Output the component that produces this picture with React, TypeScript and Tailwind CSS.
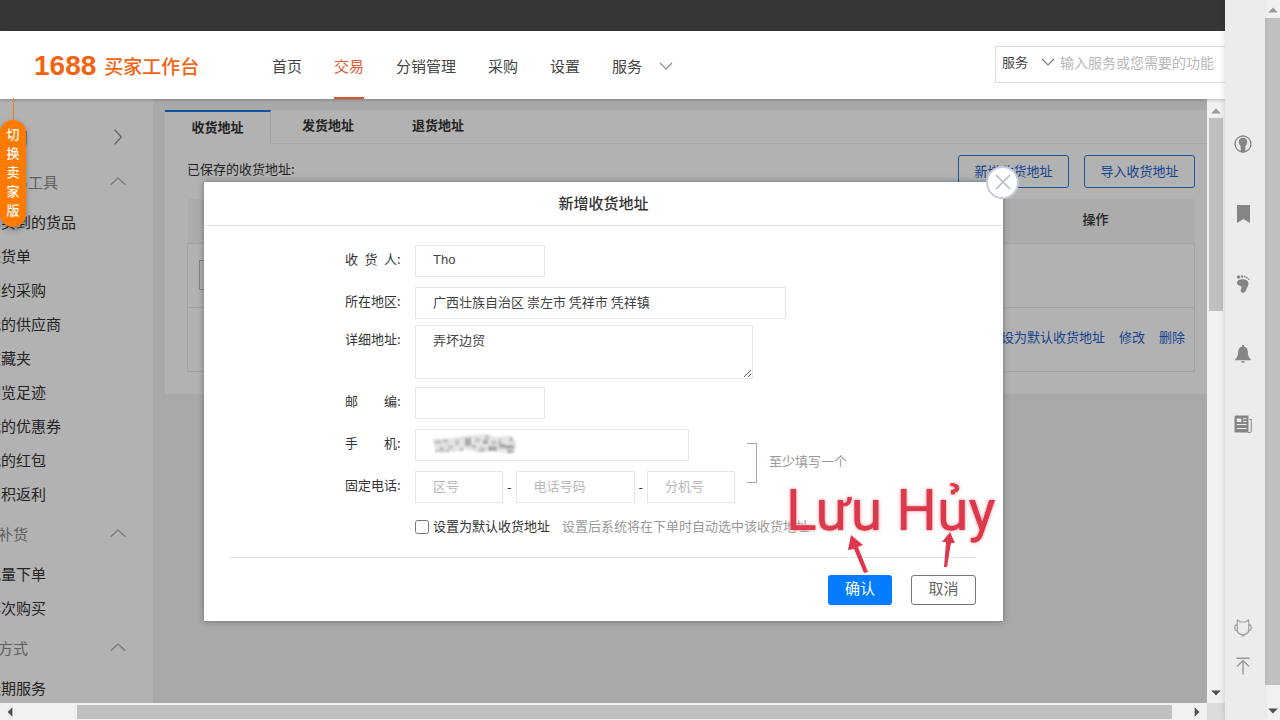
import { useState } from "react";

type MenuEntry = { label: string; heading?: boolean };

const NAV = ["首页", "交易", "分销管理", "采购", "设置"];
const TABS = ["收货地址", "发货地址", "退货地址"];

const MENU: MenuEntry[] = [
  { label: "交易工具", heading: true },
  { label: "已买到的货品" },
  { label: "进货单" },
  { label: "签约采购" },
  { label: "我的供应商" },
  { label: "收藏夹" },
  { label: "浏览足迹" },
  { label: "我的优惠券" },
  { label: "我的红包" },
  { label: "累积返利" },
  { label: "补货", heading: true },
  { label: "批量下单" },
  { label: "再次购买" },
  { label: "方式", heading: true },
  { label: "账期服务" },
];

const field = "h-8 border border-[#e6e6e6] bg-white px-[17px] pb-0.5 text-[13px] text-[#444] outline-none placeholder:text-[#b8b8b8]";

function Chevron({ className, d }: { className: string; d: string }) {
  return (
    <svg className={className} viewBox="0 0 16 16" fill="none" stroke="currentColor" strokeWidth={1.1}>
      <path d={d} />
    </svg>
  );
}

function Arrow({ className, points }: { className: string; points: string }) {
  return (
    <svg className={`shrink-0 ${className}`} viewBox="0 0 10 10" fill="currentColor">
      <polygon points={points} />
    </svg>
  );
}

function FieldLabel({ id, text }: { id: string; text: string }) {
  return (
    <label htmlFor={id} className="mr-3 flex h-8 w-[58px] shrink-0 items-center pb-[3px]">
      <span className="w-[52px] whitespace-nowrap [text-align-last:justify]">{text}</span>:
    </label>
  );
}

function Header() {
  return (
    <header className="relative z-10 flex h-[68px] shrink-0 items-center bg-white pl-[34px] shadow-[0_1px_3px_rgba(0,0,0,0.25)]">
      <a href="#" className="flex w-[238px] shrink-0 items-center gap-2 pt-0.5 text-[#f26413]">
        <span className="text-[28px] leading-8 font-bold font-['Liberation_Sans',sans-serif]">1688</span>
        <span className="text-[19px] font-medium">买家工作台</span>
      </a>
      <nav className="flex h-full items-center gap-8 text-[15px] text-[#444]">
        {NAV.map((n) => (
          <a
            key={n}
            href="#"
            className={`flex h-full items-center border-b-2 pt-1 whitespace-nowrap ${n === "交易" ? "border-[#d9532c] text-[#e0592f]" : "border-transparent"}`}
          >
            {n}
          </a>
        ))}
        <a href="#" className="flex h-full items-center gap-4 border-b-2 border-transparent pt-1 whitespace-nowrap">
          服务
          <Chevron className="size-4 text-[#888]" d="M2 5l6 6 6-6" />
        </a>
      </nav>
      <div className="mb-0.5 ml-auto flex h-[37px] w-[230px] shrink-0 items-center border border-r-0 border-[#dcdcdc] pb-1 pl-1.5">
        <div className="relative flex items-center">
          <select aria-label="搜索类型" className="w-[54px] appearance-none text-[13px] text-[#444] outline-none">
            <option>服务</option>
          </select>
          <Chevron className="pointer-events-none absolute right-0 size-4 text-[#777]" d="M2 5l6 6 6-6" />
        </div>
        <input
          aria-label="搜索"
          placeholder="输入服务或您需要的功能"
          className="ml-1 min-w-0 flex-1 text-sm outline-none placeholder:text-[#b8b8b8]"
        />
      </div>
    </header>
  );
}

function Sidebar() {
  return (
    <aside className="w-[153px] shrink-0 overflow-hidden bg-white text-[15px] text-[#333]">
      <a href="#" className="-ml-0.5 flex h-[61px] items-center justify-between pt-[15px] pr-[26px]">
        应用
        <Chevron className="size-[18px] text-[#888]" d="M5 1.500l6 6.500-6 6.500" />
      </a>
      {MENU.map((m) =>
        m.heading ? (
          <button key={m.label} type="button" className="-ml-0.5 flex h-[46px] w-[155px] items-center justify-between pr-[26px] pb-0.5 text-[#8a8a8a]">
            {m.label}
            <Chevron className="size-[18px] text-[#aaa]" d="M1.500 10.500l6.500-6 6.500 6" />
          </button>
        ) : (
          <a key={m.label} href="#" className="-ml-3.5 flex h-[34px] items-center pb-0.5 whitespace-nowrap">
            {m.label}
          </a>
        )
      )}
    </aside>
  );
}

function AddressPanel() {
  return (
    <main className="min-w-0 flex-1 overflow-hidden bg-[#f2f2f2] pt-[11px] pl-3 text-[13px] text-[#333]">
      <div className="bg-white pb-[22px]">
        <div className="flex h-[34px] gap-1 border-b border-[#f0f0f0] font-bold" role="tablist">
          {TABS.map((t, i) => (
            <button
              key={t}
              type="button"
              role="tab"
              aria-selected={i === 0}
              className={i === 0 ? "h-[34px] w-[106px] border-t-2 border-r border-t-[#1677e6] border-r-[#e4e4e4] bg-white pb-0.5" : "w-[106px] pb-1"}
            >
              {t}
            </button>
          ))}
        </div>

        <div className="flex items-start pt-[11px] pr-3 pl-[22px]">
          <p className="mr-auto leading-7">已保存的收货地址:</p>
          <button type="button" className="h-[33px] w-[111px] rounded-[3px] border border-[#2a7ddd] pb-0.5 text-[#2361cc]">新增收货地址</button>
          <button type="button" className="ml-[15px] h-[33px] w-[111px] rounded-[3px] border border-[#2a7ddd] pb-0.5 text-[#2361cc]">导入收货地址</button>
        </div>

        <div className="mt-[11px] pr-3 pl-[22px]">
          <table className="w-full border-collapse">
            <thead>
              <tr className="h-11 bg-[#f6f6f6]">
                <th />
                <th className="w-[198px] pb-1 font-medium">操作</th>
              </tr>
            </thead>
            <tbody>
              <tr className="h-16 border border-[#e8e8e8]">
                <td className="pl-[11px]"><span className="block h-[30px] w-20 border border-[#bbb]" /></td>
                <td />
              </tr>
              <tr className="h-16 border border-[#e8e8e8]">
                <td />
                <td className="pr-[9px] pb-1 whitespace-nowrap text-[#2361cc]">
                  <div className="flex justify-end gap-3.5">
                    <a href="#">设为默认收货地址</a>
                    <a href="#">修改</a>
                    <a href="#">删除</a>
                  </div>
                </td>
              </tr>
            </tbody>
          </table>
        </div>
      </div>
    </main>
  );
}

// smudge that hides the saved phone number
function Smudge() {
  return (
    <svg className="pointer-events-none absolute top-1 left-4 h-6 w-[88px]" viewBox="0 0 88 24">
      <defs>
        <filter id="soft" x="-10%" y="-10%" width="120%" height="120%"><feGaussianBlur stdDeviation="1.1" /></filter>
      </defs>
      <g filter="url(#soft)">
        <polygon points="1,6 20,5 34,3 56,1 64,4 80,3 85,9 84,20 70,19 60,18 48,20 34,16 22,19 6,20" fill="#e4e4e4" />
        <path d="M4 7h6v4H4zM12 6h5v4h-5zM8 14h5v5H8zM17 12h5v4h-5zM24 7h4v5h-4zM44 5h5v4h-5zM54 2h4v5h-4zM48 14h6v5h-6zM67 7h4v5h-4zM78 4h4v5h-4z" fill="#c4c4c4" />
        <path d="M34 5h6v8h-6zM52 7h5v4h-5zM57 13h9v5h-9zM68 11h6v4h-6zM74 12h9v4h-9zM76 17h6v3h-6z" fill="#a9a9a9" />
        <path d="M4 17h3v2H4zM14 17h4v2h-4zM29 15h3v3h-3zM41 12h4v3h-4zM61 8h4v3h-4z" fill="#b4b4b4" />
      </g>
    </svg>
  );
}

function Notes() {
  return (
    <div className="pointer-events-none absolute top-[293px] left-[582px] text-[#dc3a4c]">
      <p className="text-[57px] leading-[72px] whitespace-nowrap font-['Roboto',sans-serif] [text-shadow:0_0_1px_#dc3a4c,0_0_4px_#eaa3ab]">Lưu Hủy</p>
      <svg className="absolute top-[58px] left-[58px] h-10 w-[112px] overflow-visible" viewBox="0 0 112 40" fill="currentColor">
        <polygon points="7,2 19,12 14,14 24,39 20,40 10,16 4,17" />
        <polygon points="106,-1 111,10 107,10 103,34 100,34 102,9 98,9" />
      </svg>
    </div>
  );
}

function AddressDialog() {
  const [name, setName] = useState("Tho");
  const [detail, setDetail] = useState("弄坏边贸");
  const [isDefault, setIsDefault] = useState(false);

  return (
    <section role="dialog" aria-labelledby="dialog-title" className="relative w-[799px] max-w-full bg-white text-[13px] text-[#333] shadow-[0_0_6px_rgba(60,70,80,0.6)]">
      <h2 id="dialog-title" className="flex h-11 items-center justify-center border-b border-[#e3e3e3] text-[15px] font-medium">新增收货地址</h2>
      <button type="button" aria-label="关闭" className="absolute -top-4 -right-4 flex size-[33px] items-center justify-center rounded-full border-2 border-[#c9ccdc] bg-white text-[#b3b9cc]">
        <svg className="size-[18px]" viewBox="0 0 18 18" fill="none" stroke="currentColor" strokeWidth={1.500}>
          <path d="M2 2l14 14M16 2L2 16" />
        </svg>
      </button>

      <form className="pt-[19px] pr-[27px] pb-4 pl-[26px]" onSubmit={(e) => e.preventDefault()}>
        <div className="pl-[115px]">
          <div className="flex">
            <FieldLabel id="name" text="收 货 人" />
            <input id="name" value={name} onChange={(e) => setName(e.target.value)} className={`w-[130px] font-['Liberation_Sans',sans-serif] ${field}`} />
          </div>
          <div className="mt-2.5 flex">
            <FieldLabel id="region" text="所在地区" />
            <input id="region" defaultValue="广西壮族自治区 崇左市 凭祥市 凭祥镇" className={`w-[371px] ${field}`} />
          </div>
          <div className="mt-1.5 flex">
            <FieldLabel id="detail" text="详细地址" />
            <textarea
              id="detail"
              value={detail}
              onChange={(e) => setDetail(e.target.value)}
              className="h-[54px] w-[338px] border border-[#e6e6e6] px-[17px] py-1 text-[13px] text-[#444] outline-none"
            />
          </div>
          <div className="mt-2 flex">
            <FieldLabel id="zip" text="邮 编" />
            <input id="zip" className={`w-[130px] ${field}`} />
          </div>

          <div className="mt-2.5 flex items-start">
            <div>
              <div className="flex">
                <FieldLabel id="mobile" text="手 机" />
                <div className="relative">
                  <input id="mobile" className={`w-[274px] ${field}`} />
                  <Smudge />
                </div>
              </div>
              <div className="mt-2.5 flex">
                <FieldLabel id="area" text="固定电话" />
                <div className="flex items-center justify-between gap-1">
                  <input id="area" placeholder="区号" className={`w-[88px] ${field}`} />
                  <span>-</span>
                  <input aria-label="电话号码" placeholder="电话号码" className={`w-[119px] ${field}`} />
                  <span>-</span>
                  <input aria-label="分机号" placeholder="分机号" className={`w-[88px] ${field}`} />
                </div>
              </div>
            </div>
            <div className="mt-3.5 ml-3 flex items-center gap-3 text-[#999]">
              <span className="h-10 w-2.5 border border-l-0 border-[#aaa]" />
              <span className="pb-1">至少填写一个</span>
            </div>
          </div>

          <div className="mt-3.5 flex h-5 items-center pl-[70px]">
            <input id="default" type="checkbox" checked={isDefault} onChange={(e) => setIsDefault(e.target.checked)} className="size-3.5" />
            <label htmlFor="default" className="ml-1 pb-0.5">设置为默认收货地址</label>
            <span className="ml-3 pb-0.5 text-[#999]">设置后系统将在下单时自动选中该收货地址</span>
          </div>
        </div>

        <div className="mt-5 flex justify-end gap-[19px] border-t border-[#e3e3e3] pt-[17px] text-[15px]">
          <button type="submit" className="h-[30px] w-16 rounded-[3px] bg-[#047cff] pb-0.5 text-white">确认</button>
          <button type="button" className="h-[30px] w-[65px] rounded-[3px] border border-[#777] pb-0.5 text-[#666]">取消</button>
        </div>
      </form>
      <Notes />
    </section>
  );
}

function SellerSwitch() {
  return (
    <div className="absolute top-[98px] left-0 z-20 flex w-[26px] flex-col">
      <span className="ml-[13px] h-[22px] w-px bg-[#f07a20]" />
      <button type="button" className="w-[26px] rounded-full bg-[#ff7a00] px-1.5 pt-1 pb-2 text-[13px] leading-[19px] font-medium text-white shadow-[0_3px_6px_rgba(0,0,0,0.3)]">
        切换卖家版
      </button>
    </div>
  );
}

function ToolRail() {
  const item = "flex h-[70px] items-center justify-center";
  return (
    <div className="relative z-20 flex w-10 shrink-0 flex-col bg-[#ececec] pt-[109px] pr-1 pb-[35px] text-[#858585] shadow-[-1px_0_5px_rgba(0,0,0,0.12)]">
      <button type="button" aria-label="账户" className={item}>
        <svg className="size-[18px]" viewBox="0 0 18 18">
          <circle cx="9" cy="9" r="8" fill="none" stroke="currentColor" strokeWidth={1.300} />
          <path d="M9 2.800c-2.700 0-4.200 1.800-4.200 4.300 0 1.700.8 3.200 1.800 3.900v6c1.600.5 3.200.5 4.800 0v-6c1-.7 1.800-2.200 1.800-3.900 0-2.500-1.500-4.300-4.200-4.300z" fill="currentColor" />
        </svg>
      </button>
      <button type="button" aria-label="收藏" className={item}>
        <svg className="size-[18px]" viewBox="0 0 18 18" fill="currentColor"><path d="M3 0h13v18l-6.500-4L3 18z" /></svg>
      </button>
      <button type="button" aria-label="足迹" className={item}>
        <svg className="size-[18px]" viewBox="0 0 18 18" fill="currentColor">
          <circle cx="4.500" cy="2" r="1.700" /><circle cx="8" cy="1.500" r="1.200" /><circle cx="10.800" cy="1.800" r="1" /><circle cx="13" cy="2.800" r=".9" /><circle cx="14.700" cy="4.200" r=".8" />
          <path d="M4.500 5.300c2.500-1.500 7.500-1.300 9.200.9 1.400 1.800.8 4.200-.5 6.200-1 1.600-1 3.200-2.200 4.500-1.400 1.400-4 1-4.300-1-.1-1.500 1.100-2.500.7-4C6.900 10.300 3.300 10.800 3 8c-.1-1.200.6-2.200 1.500-2.700z" />
        </svg>
      </button>
      <button type="button" aria-label="消息" className={item}>
        <svg className="size-[18px]" viewBox="0 0 18 18" fill="currentColor">
          <path d="M8 0h2v1.500c2.500.6 3.700 2.600 3.800 5 .1 3.500.7 6 3 7.700v1H1.200v-1c2.300-1.700 2.900-4.200 3-7.700.1-2.400 1.300-4.400 3.800-5zM7 16.300h4c-.3 1-1 1.500-2 1.500s-1.700-.5-2-1.500z" />
        </svg>
      </button>
      <button type="button" aria-label="资讯" className={item}>
        <svg className="size-[18px]" viewBox="0 0 18 18">
          <path d="M2 .5h12.500V17.500H2a1.500 1.500 0 01-1.500-1.500V2A1.500 1.500 0 012 .5z" fill="currentColor" />
          <path d="M15.500 4.500h1.800V16a1.500 1.500 0 01-1.500 1.500h-2" fill="none" stroke="currentColor" />
          <path d="M2.800 3.500h4.500v3.500H2.800z" fill="#ececec" />
          <path d="M9 3.700h3.500M9 6.500h3.500M2.800 9.500h9.700M2.800 13.500h9.700" stroke="#ececec" strokeWidth={1} />
        </svg>
      </button>
      <button type="button" aria-label="客服" className="mt-auto flex h-[38px] items-center justify-center text-[#a0a0a0]">
        <svg className="size-[18px]" viewBox="0 0 18 18" fill="none" stroke="currentColor" strokeWidth={1.200}>
          <path d="M3 5.500L3.500 1l3 2h5l3-2 .5 4.500M3.300 12c.8 2.300 3 3.500 5.700 3.500s4.900-1.200 5.700-3.500M3.300 5.500v6.500c-1.700 0-2.500-1.300-2.500-3.200s.8-3.300 2.500-3.300zM14.700 5.500v6.500c1.700 0 2.500-1.300 2.500-3.200s-.8-3.300-2.500-3.300z" />
          <path d="M7.500 16.500h3" strokeWidth={2} />
        </svg>
      </button>
      <button type="button" aria-label="回到顶部" className="flex h-[38px] items-center justify-center text-[#999]">
        <svg className="size-[18px]" viewBox="0 0 18 18" fill="none" stroke="currentColor" strokeWidth={1.400}>
          <path d="M2.500 1.300h13M9 17.500V4M3 9.500l6-6 6 6" />
        </svg>
      </button>
    </div>
  );
}

export default function App() {
  return (
    <div className="flex h-screen overflow-hidden bg-[#f1f1f1] font-['Noto_Sans_CJK_SC',sans-serif]">
      <div className="relative flex min-w-0 flex-1 flex-col">
        <div className="h-[31px] shrink-0 bg-[#363636]" />
        <Header />
        <SellerSwitch />

        <div className="flex min-h-0 flex-1">
          <div className="relative flex min-w-0 flex-1 overflow-hidden">
            <Sidebar />
            <AddressPanel />
            <div className="absolute inset-0 flex items-center justify-center bg-black/30">
              <AddressDialog />
            </div>
          </div>
          <div className="flex w-[18px] shrink-0 flex-col items-center pt-1.5 pb-1">
            <Arrow className="size-3 text-[#999]" points="1,7 9,7 5,3" />
            <div className="mt-px h-[193px] w-3.5 bg-[#c0c0c0]" />
            <Arrow className="mt-auto size-3 text-[#505050]" points="1,3 9,3 5,7" />
          </div>
        </div>

        <div className="flex h-[17px] shrink-0 items-center bg-[#f1f1f1]">
          <Arrow className="mx-1 size-3 text-[#505050]" points="7,1 7,9 3,5" />
          <div className="ml-[57px] h-3.5 flex-1 bg-[#c0c0c0]" />
          <Arrow className="mr-1 ml-[19px] size-3 text-[#505050]" points="3,1 3,9 7,5" />
          <div className="h-full w-[18px] bg-[#dcdcdc]" />
        </div>
      </div>

      <ToolRail />

      <div className="flex w-[15px] shrink-0 flex-col items-center pt-1 pb-[3px]">
        <Arrow className="size-3 text-[#999]" points="1,7 9,7 5,3" />
        <div className="mt-0.5 mb-5 w-full flex-1 bg-[#c0c0c0]" />
        <Arrow className="size-3 text-[#505050]" points="1,3 9,3 5,7" />
      </div>
    </div>
  );
}
